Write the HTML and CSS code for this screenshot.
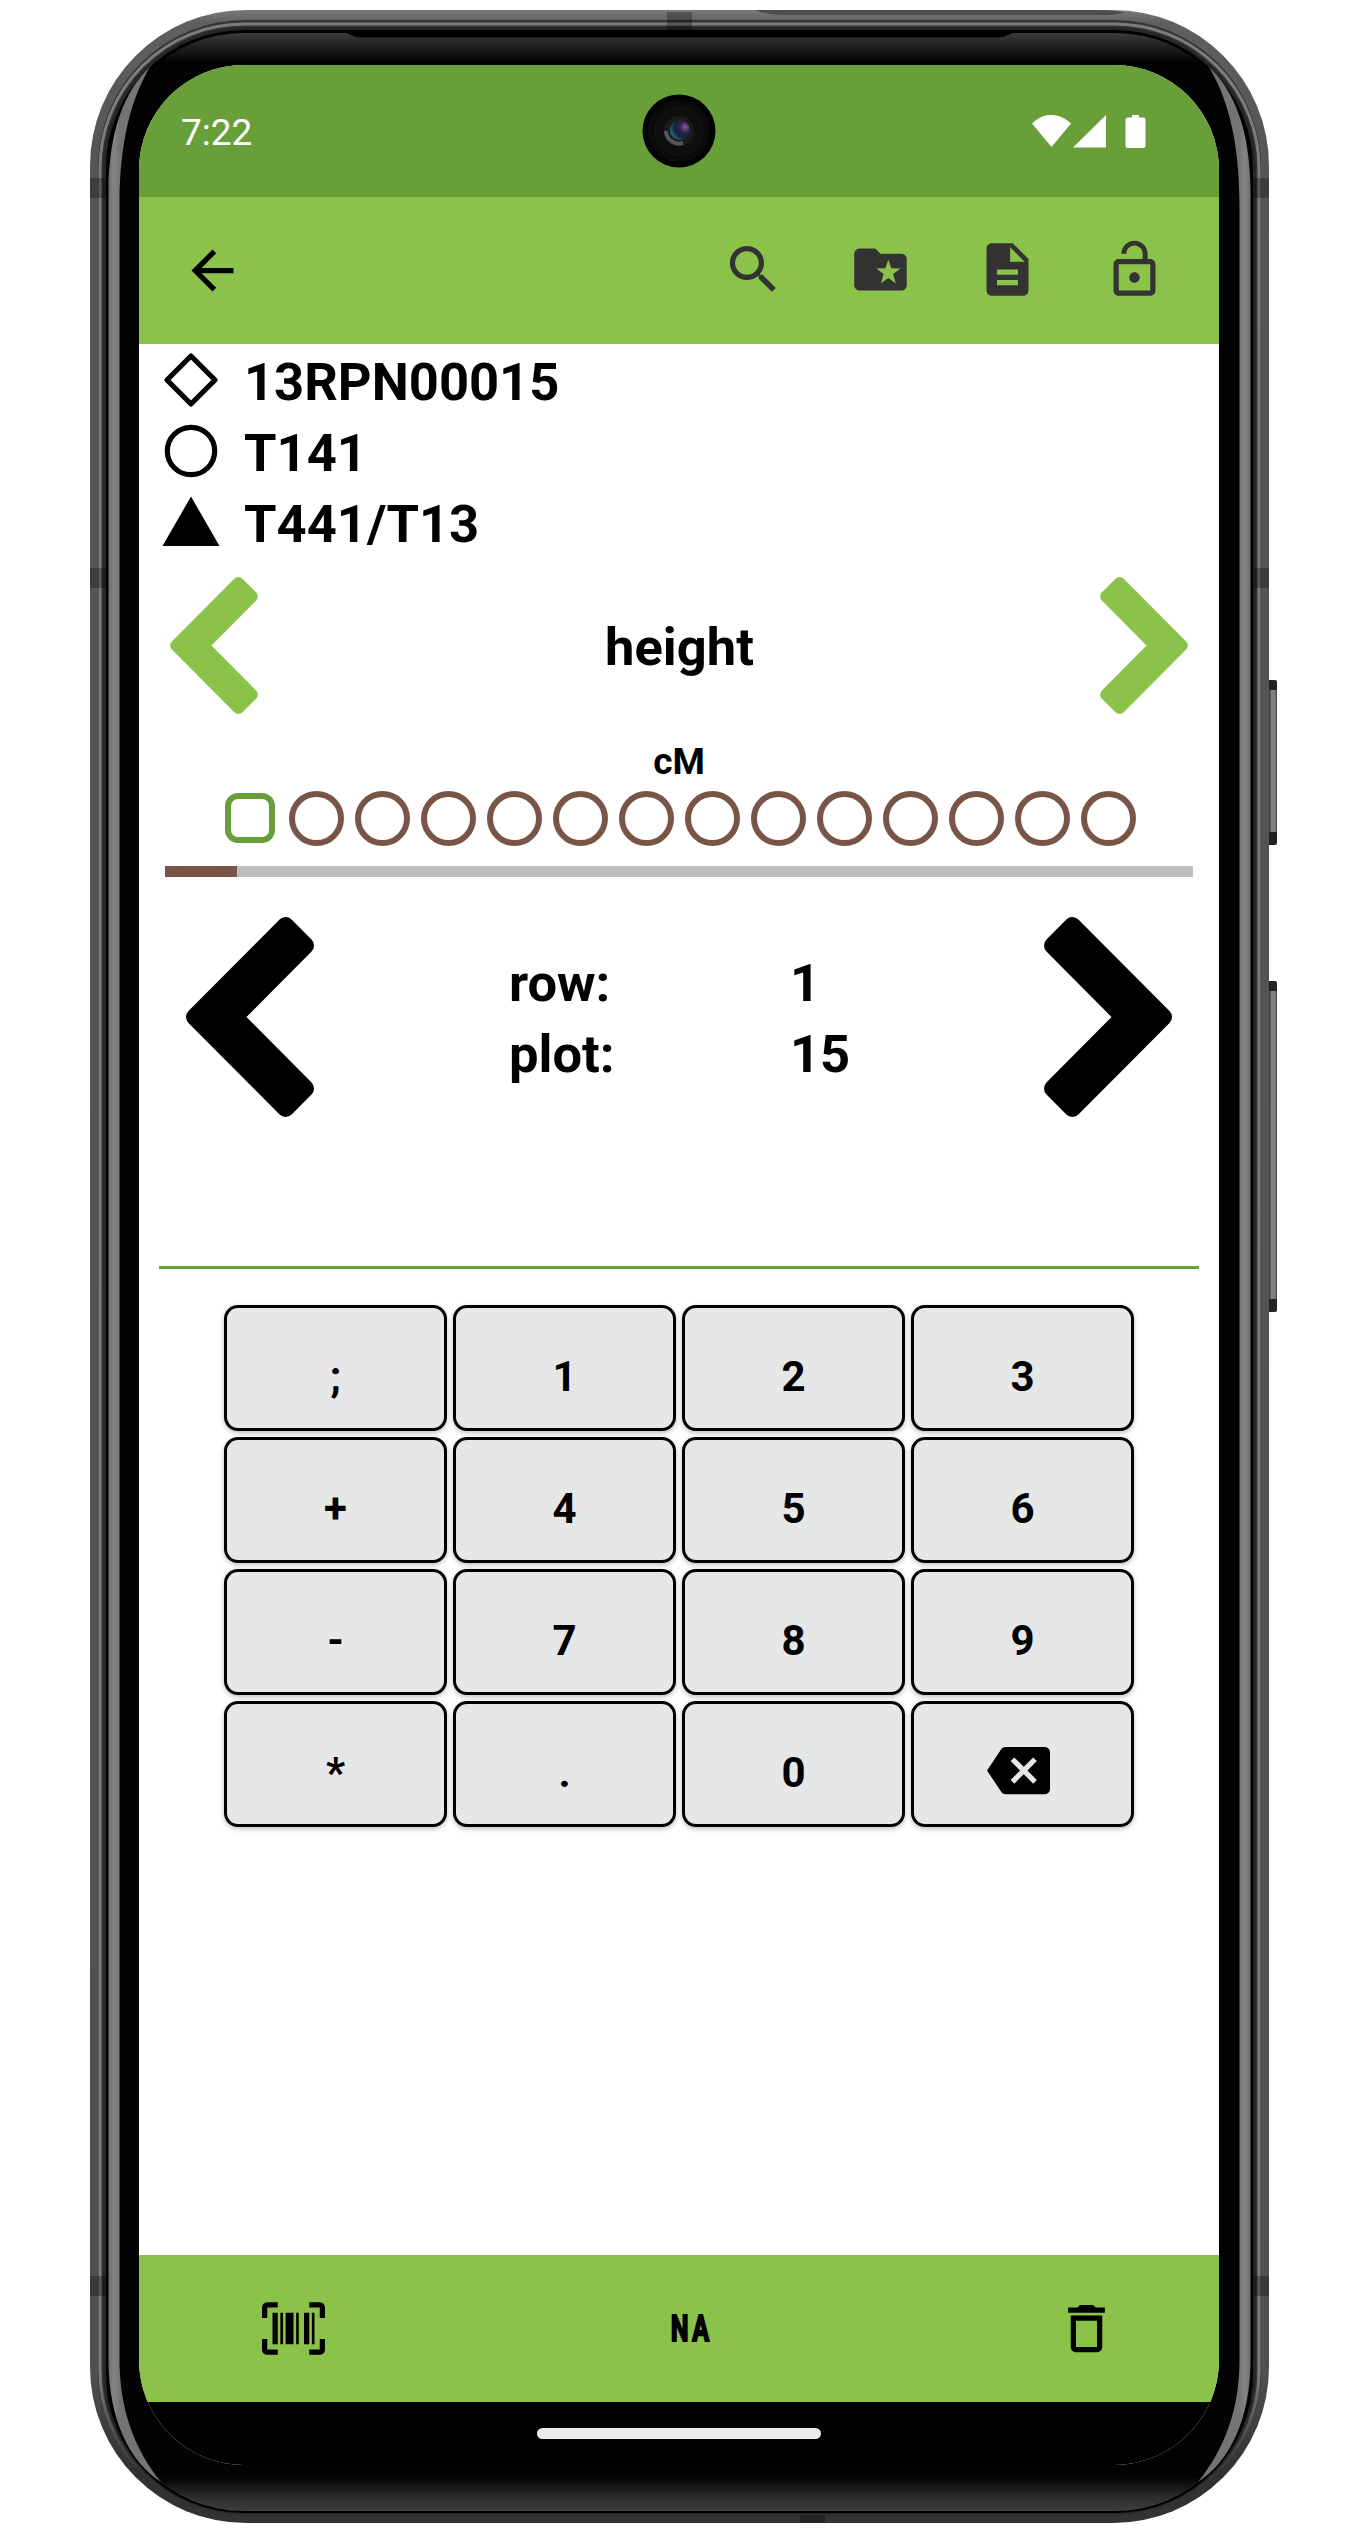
FILE: index.html
```html
<!DOCTYPE html>
<html lang="en">
<head>
<meta charset="utf-8">
<title>Field Book</title>
<link rel="stylesheet" href="styles.css">
</head>
<body>
<div class="device">
  <svg class="frame" width="1367" height="2533" viewBox="0 0 1367 2533" aria-hidden="true">
    <defs>
      <linearGradient id="bezel" x1="0" y1="33" x2="0" y2="2512" gradientUnits="userSpaceOnUse">
        <stop offset="0" stop-color="#3c3c3c"/><stop offset=".004" stop-color="#262626"/><stop offset=".012" stop-color="#030303"/>
        <stop offset=".986" stop-color="#030303"/><stop offset=".994" stop-color="#2c2c2c"/><stop offset="1" stop-color="#404040"/>
      </linearGradient>
      <linearGradient id="shell" x1="0" y1="10" x2="0" y2="2523" gradientUnits="userSpaceOnUse">
        <stop offset="0" stop-color="#7a7a7a"/><stop offset=".005" stop-color="#5f5f5f"/><stop offset=".06" stop-color="#555"/>
        <stop offset=".94" stop-color="#505050"/><stop offset=".98" stop-color="#303030"/><stop offset="1" stop-color="#333"/>
      </linearGradient>
      <linearGradient id="gleam" x1="0" y1="10" x2="0" y2="2523" gradientUnits="userSpaceOnUse">
        <stop offset="0" stop-color="#7c7c7c"/><stop offset=".94" stop-color="#7c7c7c"/><stop offset=".98" stop-color="#333"/><stop offset="1" stop-color="#303030"/>
      </linearGradient>
      <linearGradient id="rimL" x1="108" x2="120" y1="0" y2="0" gradientUnits="userSpaceOnUse">
        <stop offset="0" stop-color="#6c6c6c"/><stop offset=".5" stop-color="#848484"/><stop offset="1" stop-color="#747474"/>
      </linearGradient>
      <linearGradient id="key" x1="1269" x2="1277" y1="0" y2="0" gradientUnits="userSpaceOnUse">
        <stop offset="0" stop-color="#333"/><stop offset=".35" stop-color="#858585"/><stop offset=".8" stop-color="#7a7a7a"/><stop offset="1" stop-color="#333"/>
      </linearGradient>
      <radialGradient id="lens" cx=".75" cy=".35" r=".8">
        <stop offset="0" stop-color="#8a5a9a"/><stop offset=".35" stop-color="#33204a"/><stop offset=".65" stop-color="#142438"/><stop offset="1" stop-color="#2a7088"/>
      </radialGradient>
    </defs>
    <rect x="1267" y="680" width="10" height="165" rx="2" fill="#222"/>
    <rect x="1269" y="690" width="8" height="142" fill="url(#key)"/>
    <rect x="1267" y="981" width="10" height="331" rx="2" fill="#222"/>
    <rect x="1269" y="991" width="8" height="308" fill="url(#key)"/>
    <rect x="90" y="10" width="1179" height="2513" rx="156" fill="url(#shell)"/>
    <path d="M755 10h345q20 1 25 3l-15 2H790q-25 0-35-5z" fill="#4c4c4c"/>
    <rect x="98" y="20" width="1163" height="2497" rx="147" fill="#343434"/>
    <rect x="100" y="24" width="1159" height="2491" rx="144" fill="none" stroke="url(#gleam)" stroke-width="3"/>
    <rect x="103" y="27" width="1153" height="2487" rx="141" fill="#262626"/>
    <rect x="106" y="30" width="1147" height="2483" rx="138" fill="#000"/>
    <rect x="108" y="33" width="1143" height="2478" rx="136" fill="url(#bezel)"/>
    <path d="M340 32c10 0 10 5.500 22 5.500H997c12 0 12-5.500 22-5.500z" fill="#000"/>
    <path id="rim" d="M108.500 190C109 130 125 90 150 67C132 97 119.500 140 119.500 205V2360C119.500 2410 135 2450 161 2482C130 2462 108.500 2420 108.500 2360z" fill="url(#rimL)"/>
    <use href="#rim" transform="matrix(-1 0 0 1 1359 0)"/>
    <g fill="#000" opacity=".28">
      <rect x="90" y="178" width="16" height="20"/><rect x="90" y="568" width="16" height="20"/><rect x="90" y="2276" width="16" height="20"/>
      <rect x="1253" y="178" width="16" height="20"/><rect x="1253" y="568" width="16" height="20"/><rect x="1253" y="2276" width="16" height="20"/>
      <rect x="667" y="12" width="25" height="18"/><rect x="800" y="2515" width="25" height="8"/>
    </g>
  </svg>

  <div class="screen">
    <div class="status">
      <span class="clock">7:22</span>
      <svg class="signals" width="116" height="36" viewBox="0 0 116 36" fill="#fff">
        <path d="M1 10.500C7 4.500 13.500 2 20 2s14 2.500 20 8.500L20.500 34z"/>
        <path d="M42 34.500L75 2v32.500z"/>
        <path d="M101 2h7v2.500h4q2.500 0 2.500 2.500v25.500q0 2.500-2.500 2.500H97q-2.500 0-2.500-2.500V7q0-2.500 2.500-2.500h4z"/>
      </svg>
      <svg class="camera" width="74" height="74" viewBox="0 0 74 74">
        <circle cx="37" cy="37" r="36.500" fill="#030303"/>
        <circle cx="37" cy="37" r="31" fill="#0a0a0a"/>
        <circle cx="37" cy="37" r="24" fill="#0e0e0e" stroke="#161616"/>
        <circle cx="37" cy="37" r="15" fill="#1a1a1a"/>
        <path d="M24 37a13 13 0 0 0 17 12" fill="none" stroke="#555" stroke-width="4"/>
        <circle cx="38" cy="36" r="10" fill="url(#lens)"/>
      </svg>
    </div>

    <div class="toolbar">
      <svg class="icon back" viewBox="0 0 24 24"><path d="M20 11H7.830l5.590-5.590L12 4l-8 8 8 8 1.410-1.410L7.830 13H20v-2z"/></svg>
      <div class="actions">
        <svg class="icon" viewBox="0 0 24 24"><path d="M15.500 14h-.79l-.28-.27C15.410 12.590 16 11.110 16 9.500 16 5.910 13.090 3 9.500 3S3 5.910 3 9.500 5.910 16 9.500 16c1.610 0 3.090-.59 4.230-1.570l.27.28v.79l5 4.990L20.490 19l-4.990-5zm-6 0C7.010 14 5 11.990 5 9.500S7.010 5 9.500 5 14 7.010 14 9.500 11.990 14 9.500 14z"/></svg>
        <svg class="icon" viewBox="0 0 24 24"><path d="M20 6H12L10 4H4A2 2 0 0 0 2 6V18A2 2 0 0 0 4 20H20A2 2 0 0 0 22 18V8A2 2 0 0 0 20 6M17.800 17.200L15 15.200L12.200 17.200L13.200 13.700L10.400 11.600L13.900 11.500L15 8.200L16.100 11.500L19.600 11.600L16.800 13.700L17.800 17.200Z"/></svg>
        <svg class="icon" viewBox="0 0 24 24"><path d="M14 2H6c-1.100 0-1.990.9-1.990 2L4 20c0 1.100.89 2 1.990 2H18c1.100 0 2-.9 2-2V8l-6-6zm2 16H8v-2h8v2zm0-4H8v-2h8v2zm-3-5V3.500L18.500 9H13z"/></svg>
        <svg class="icon" viewBox="0 0 24 24"><path d="M12 17c1.100 0 2-.9 2-2s-.9-2-2-2-2 .9-2 2 .9 2 2 2zm6-9h-1V6c0-2.760-2.240-5-5-5S7 3.240 7 6h1.900c0-1.710 1.390-3.100 3.100-3.100 1.710 0 3.100 1.390 3.100 3.100v2H6c-1.100 0-2 .9-2 2v10c0 1.100.9 2 2 2h12c1.100 0 2-.9 2-2V10c0-1.100-.9-2-2-2zm0 12H6V10h12v10z"/></svg>
      </div>
    </div>

    <main class="content">
      <ul class="info">
        <li><svg width="58" height="58" viewBox="0 0 58 58"><path d="M29 5L53 29L29 53L5 29Z" fill="none" stroke="#000" stroke-width="5.250" stroke-linejoin="round"/></svg>13RPN00015</li>
        <li><svg width="58" height="58" viewBox="0 0 58 58"><circle cx="29" cy="29" r="23.700" fill="none" stroke="#000" stroke-width="5.250"/></svg>T141</li>
        <li><svg width="58" height="58" viewBox="0 0 58 58"><path d="M29 3.500L57.500 53H.5z"/></svg>T441/T13</li>
      </ul>

      <section class="trait">
        <svg class="chev green" viewBox="0 0 128 200"><path d="M8.500 100L99.600 8.500L119.500 28.400L48.500 100L119.500 171.600L99.600 191.500Z"/></svg>
        <h1>height</h1>
        <svg class="chev green flip" viewBox="0 0 128 200"><path d="M8.500 100L99.600 8.500L119.500 28.400L48.500 100L119.500 171.600L99.600 191.500Z"/></svg>
      </section>

      <p class="unit">cM</p>
      <div class="dots">
        <i class="dot current"></i><i class="dot"></i><i class="dot"></i><i class="dot"></i><i class="dot"></i><i class="dot"></i><i class="dot"></i><i class="dot"></i><i class="dot"></i><i class="dot"></i><i class="dot"></i><i class="dot"></i><i class="dot"></i><i class="dot"></i>
      </div>
      <div class="progress"><div class="bar" style="width:7%"></div></div>

      <section class="range">
        <svg class="chev" viewBox="0 0 128 200"><path d="M8.500 100L99.600 8.500L119.500 28.400L48.500 100L119.500 171.600L99.600 191.500Z"/></svg>
        <dl>
          <dt>row:</dt><dd>1</dd>
          <dt>plot:</dt><dd>15</dd>
        </dl>
        <svg class="chev flip" viewBox="0 0 128 200"><path d="M8.500 100L99.600 8.500L119.500 28.400L48.500 100L119.500 171.600L99.600 191.500Z"/></svg>
      </section>

      <div class="entry"></div>

      <div class="keypad">
        <button>;</button><button>1</button><button>2</button><button>3</button>
        <button>+</button><button>4</button><button>5</button><button>6</button>
        <button>-</button><button>7</button><button>8</button><button>9</button>
        <button>*</button><button>.</button><button>0</button>
        <button class="erase"><svg class="icon" viewBox="0 0 24 24"><path d="M22 3H7c-.69 0-1.230.35-1.590.88L0 12l5.410 8.110c.36.53.9.89 1.590.89h15c1.100 0 2-.9 2-2V5c0-1.100-.9-2-2-2zm-3 12.590L17.590 17 14 13.410 10.410 17 9 15.590 12.590 12 9 8.410 10.410 7 14 10.590 17.590 7 19 8.410 15.410 12 19 15.590z"/></svg></button>
      </div>
    </main>

    <div class="bottombar">
      <svg class="icon" viewBox="0 0 24 24"><path d="M4 6H6V18H4V6M7 6H8V18H7V6M9 6H12V18H9V6M13 6H14V18H13V6M16 6H18V18H16V6M19 6H20V18H19V6M2 4V8H0V4A2 2 0 0 1 2 2H6V4H2M22 2A2 2 0 0 1 24 4V8H22V4H18V2H22M2 16V20H6V22H2A2 2 0 0 1 0 20V16H2M22 20V16H24V20A2 2 0 0 1 22 22H18V20H22"/></svg>
      <span class="na">NA</span>
      <svg class="icon" viewBox="0 0 24 24"><path d="M6 19c0 1.100.9 2 2 2h8c1.100 0 2-.9 2-2V7H6v12zM8 9h8v10H8V9zm7.500-5l-1-1h-5l-1 1H5v2h14V4h-3.500z"/></svg>
    </div>
    <div class="navbar"><div class="pill"></div></div>
  </div>
</div>
</body>
</html>
```
FILE: styles.css
```css
* { box-sizing: border-box; margin: 0; padding: 0; }
body { background: #fff; font-family: Roboto, "Liberation Sans", sans-serif; color: #000; }
svg { display: block; flex: none; }

.device { position: relative; width: 1367px; height: 2533px; padding: 65px 148px 0 139px; overflow: hidden; }
.frame { position: absolute; left: 0; top: 0; }

.screen { position: relative; width: 1080px; height: 2400px; display: flex; flex-direction: column; background: #fff; border-radius: 105px; overflow: hidden; }

.status { position: relative; flex: none; height: 132px; padding: 0 72px 0 42px; display: flex; align-items: center; justify-content: space-between; background: #689f38; color: #fff; }
.clock { font-size: 37px; line-height: 44px; padding-top: 4px; }
.signals { margin-top: -1px; }
.camera { position: absolute; left: 503px; top: 29px; }

.icon { width: 63px; height: 63px; fill: #000; }
.toolbar { flex: none; height: 147px; padding: 0 53px 0 42px; display: flex; align-items: center; justify-content: space-between; background: #8bc34a; }
.actions { display: flex; gap: 64px; padding-bottom: 2px; }
.actions .icon { fill: #333; }

.content { flex: 1; }
.info { list-style: none; padding: 3px 23px 3px; font-size: 52.5px; font-weight: 700; line-height: 71px; }
.info li { display: flex; align-items: center; gap: 24px; height: 71px; }
.info svg { margin-bottom: 6px; }

.chev { width: 128px; height: 200px; fill: currentColor; stroke: currentColor; stroke-width: 17; stroke-linejoin: round; }
.chev.green { width: 88px; height: 137px; color: #8bc34a; }
.flip { transform: scaleX(-1); }

.trait { display: flex; align-items: center; justify-content: space-between; height: 137px; margin-top: 14px; padding: 0 31px; }
.trait h1 { font-size: 52.5px; line-height: 62px; font-weight: 700; padding: 2px 0 0 1px; }

.unit { margin-top: 26px; font-size: 37px; line-height: 43px; font-weight: 700; text-align: center; }
.dots { display: grid; grid-template-columns: repeat(14, 66px); justify-content: center; place-items: center; height: 66px; margin-top: 2px; }
.dot { width: 55px; height: 55px; border: 6px solid #795548; border-radius: 50%; }
.dot.current { width: 50px; height: 50px; border-color: #689f38; border-radius: 13px; }
.progress { height: 11px; margin: 15px 26px 0; background: #bdbdbd; }
.bar { height: 100%; background: #795548; }

.range { display: flex; align-items: center; justify-content: space-between; height: 200px; margin-top: 40px; padding: 0 47px; }
.range dl { display: grid; grid-template-columns: 281px 141px; grid-auto-rows: 71px; margin: 4px -82px 0 0; width: 422px; font-size: 52.5px; line-height: 71px; font-weight: 700; }

.entry { height: 149px; margin: 3px 20px 0; border-bottom: 3px solid #689f38; }

.keypad { display: grid; grid-template-columns: repeat(4, 223px); grid-auto-rows: 126px; gap: 6px; justify-content: center; margin-top: 36px; }
.keypad button { display: flex; align-items: center; justify-content: center; padding-top: 17px; font: 700 42px/49px Roboto, "Liberation Sans", sans-serif; color: #000; background: #e6e8e7; border: 3px solid #000; border-radius: 14px; box-shadow: 0 2px 5px rgba(0, 0, 0, .25); }
.keypad .erase { padding: 12px 8px 0 0; }

.bottombar { flex: none; height: 147px; padding: 0 101px 0 123px; display: flex; align-items: center; justify-content: space-between; background: #8bc34a; }
.na { font-size: 37px; line-height: 44px; font-weight: 700; letter-spacing: 5px; margin-right: -3px; transform: scaleX(.68); -webkit-text-stroke: 2px #000; }
.navbar { flex: none; height: 63px; background: #000; padding-top: 26px; }
.pill { width: 284px; height: 11px; margin: 0 auto; border-radius: 6px; background: #ebebeb; }
```
